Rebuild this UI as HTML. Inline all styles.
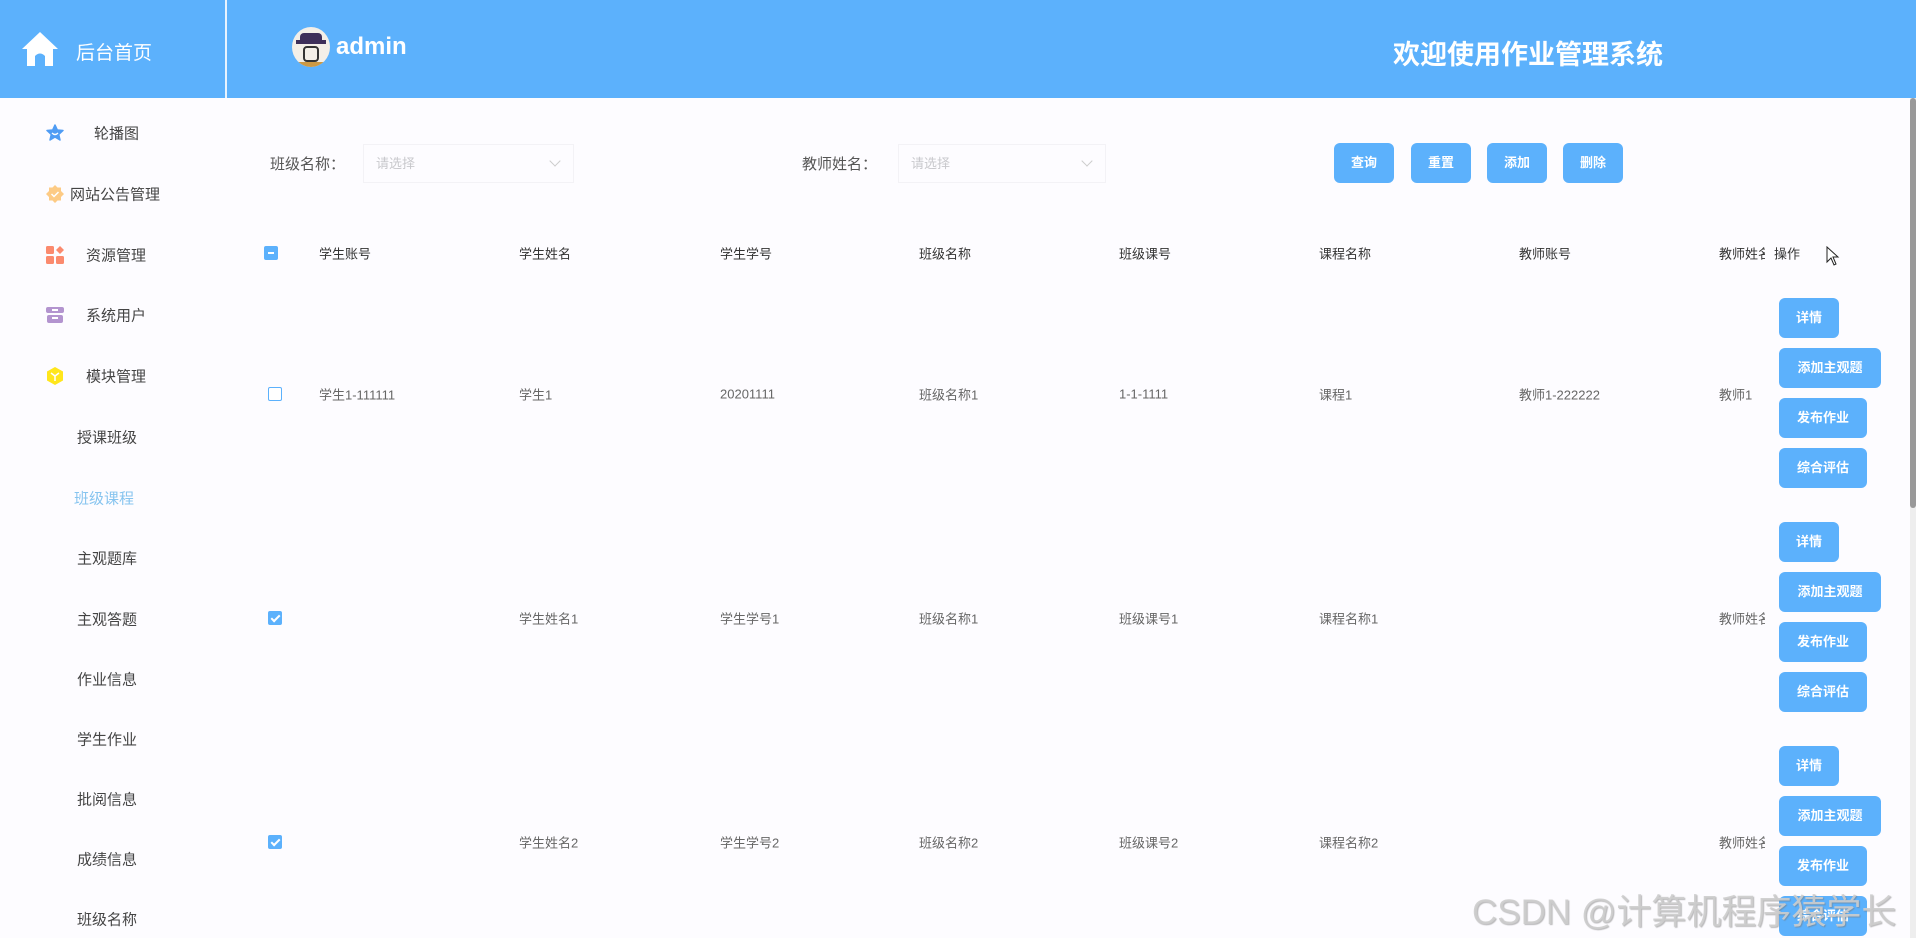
<!DOCTYPE html>
<html><head><meta charset="utf-8"><style>
*{margin:0;padding:0;box-sizing:border-box}
body{width:1916px;height:938px;overflow:hidden;background:#fdfcff;font-family:"Liberation Sans","Noto Sans CJK SC",sans-serif;position:relative}
.a{position:absolute;white-space:nowrap}
.hdr{left:0;top:0;width:1916px;height:98px;background:#5cb1fc}
.side{font-size:15px;color:#444;transform:translateY(-50%)}
.btn{position:absolute;background:#5cb1fc;color:#fff;font-size:13px;font-weight:bold;border-radius:6px;height:40px;line-height:40px;text-align:center}
.th{font-size:13px;color:#333;transform:translateY(-50%)}
.td{font-size:13px;color:#666;transform:translateY(-50%)}
.cb{position:absolute;width:14px;height:14px;border:1px solid #5cb1fc;border-radius:2px;background:#fff}
.cb.on{background:#5cb1fc}
.cb.on:after{content:"";position:absolute;left:4px;top:1px;width:3px;height:7px;border:solid #fff;border-width:0 2px 2px 0;transform:rotate(45deg)}
.sel{position:absolute;height:39px;border:1px solid #f3f2f6;background:#fdfcff;font-size:13px;color:#c8c8cc;line-height:37px;padding-left:12px}
.sel:after{content:"";position:absolute;right:14px;top:12px;width:7px;height:7px;border:solid #ccc;border-width:0 1px 1px 0;transform:rotate(45deg)}
</style></head><body>
<div class="a hdr"></div>
<div class="a" style="left:225px;top:0;width:2px;height:98px;background:#e8f3fe"></div>
<svg class="a" style="left:20px;top:30px" width="40" height="38" viewBox="0 0 40 38"><path d="M20 2 L38 19 L33 19 L33 36 L25 36 L25 26 Q20 21 15 26 L15 36 L7 36 L7 19 L2 19 Z" fill="#fff"/></svg>
<div class="a" style="left:76px;top:38px;font-size:19px;color:#fff">后台首页</div>
<div class="a" style="left:292px;top:27px;width:38px;height:40px;border-radius:50%;background:#f3efe8;overflow:hidden">
<div style="position:absolute;left:8px;top:6px;width:22px;height:8px;background:#3d2f5a;border-radius:4px 4px 0 0"></div>
<div style="position:absolute;left:4px;top:13px;width:30px;height:4px;background:#3d2f5a"></div>
<div style="position:absolute;left:11px;top:19px;width:16px;height:16px;border:2px solid #333;border-radius:4px"></div>
<div style="position:absolute;left:6px;top:35px;width:26px;height:5px;background:#c94"></div></div>
<div class="a" style="left:336px;top:33px;font-size:24px;color:#fff;font-weight:bold">admin</div>
<div class="a" style="left:1393px;top:33px;font-size:27px;color:#fff;font-weight:bold">欢迎使用作业管理系统</div>
<div class="a" style="left:1910px;top:98px;width:6px;height:840px;background:#eee"></div>
<div class="a" style="left:1910px;top:98px;width:6px;height:410px;background:#999;border-radius:3px"></div>

<svg class="a" style="left:46px;top:124px" width="18" height="18" viewBox="0 0 18 18"><path d="M9 1 L11.3 6 L17 6.5 L12.7 10.4 L14 16 L9 13 L4 16 L5.3 10.4 L1 6.5 L6.7 6 Z" fill="#4f9cf4" stroke="#4f9cf4" stroke-linejoin="round" stroke-width="1.5"/><path d="M6 9 Q9 12 12 9" stroke="#fff" fill="none" stroke-width="1.3"/></svg>
<div class="a side" style="left:94px;top:133px">轮播图</div>
<svg class="a" style="left:46px;top:185px" width="18" height="18" viewBox="0 0 18 18"><path d="M9 0 L11.5 2.5 L15 2.5 L15 6 L18 9 L15 12 L15 15.5 L11.5 15.5 L9 18 L6.5 15.5 L3 15.5 L3 12 L0 9 L3 6 L3 2.5 L6.5 2.5 Z" fill="#fdcb85"/><path d="M5.5 9 L8 11.5 L12.5 7" stroke="#fff" fill="none" stroke-width="1.5"/></svg>
<div class="a side" style="left:70px;top:194px">网站公告管理</div>
<svg class="a" style="left:46px;top:246px" width="18" height="18" viewBox="0 0 18 18"><rect x="0" y="0" width="8" height="8" rx="1.5" fill="#fb8a6e"/><rect x="0" y="10" width="8" height="8" rx="1.5" fill="#fb8a6e"/><rect x="10" y="10" width="8" height="8" rx="1.5" fill="#fb8a6e"/><path d="M14 0 L18 4 L14 8 L10 4 Z" fill="#fb8a6e"/></svg>
<div class="a side" style="left:86px;top:255px">资源管理</div>
<svg class="a" style="left:46px;top:306px" width="18" height="18" viewBox="0 0 18 18"><rect x="0" y="1" width="18" height="6" rx="2" fill="#b394cf"/><rect x="1" y="9" width="16" height="8" rx="2" fill="#b394cf"/><rect x="6" y="11" width="6" height="2" fill="#fff"/><rect x="6" y="3" width="6" height="2" fill="#fff"/></svg>
<div class="a side" style="left:86px;top:315px">系统用户</div>
<svg class="a" style="left:46px;top:367px" width="18" height="18" viewBox="0 0 18 18"><path d="M9 0 L17 4.5 L17 13.5 L9 18 L1 13.5 L1 4.5 Z" fill="#ffe61c"/><path d="M5 6 L9 9 L13 6 M9 9 L9 14" stroke="#fff" fill="none" stroke-width="1.5"/></svg>
<div class="a side" style="left:86px;top:376px">模块管理</div>
<div class="a side" style="left:77px;top:437px">授课班级</div>
<div class="a side" style="left:74px;top:498px;color:#86c4ef">班级课程</div>
<div class="a side" style="left:77px;top:558px">主观题库</div>
<div class="a side" style="left:77px;top:619px">主观答题</div>
<div class="a side" style="left:77px;top:679px">作业信息</div>
<div class="a side" style="left:77px;top:739px">学生作业</div>
<div class="a side" style="left:77px;top:799px">批阅信息</div>
<div class="a side" style="left:77px;top:859px">成绩信息</div>
<div class="a side" style="left:77px;top:919px">班级名称</div>

<div class="a" style="left:270px;top:153px;font-size:15px;color:#555">班级名称：</div>
<div class="sel" style="left:363px;top:144px;width:211px">请选择</div>
<div class="a" style="left:802px;top:153px;font-size:15px;color:#555">教师姓名：</div>
<div class="sel" style="left:898px;top:144px;width:208px">请选择</div>
<div class="btn" style="left:1334px;top:143px;width:60px">查询</div>
<div class="btn" style="left:1411px;top:143px;width:60px">重置</div>
<div class="btn" style="left:1487px;top:143px;width:60px">添加</div>
<div class="btn" style="left:1563px;top:143px;width:60px">删除</div>

<div class="cb" style="left:264px;top:246px;background:#5cb1fc"></div>
<div class="a" style="left:268px;top:252px;width:6px;height:2px;background:#fff"></div>
<div class="a th" style="left:319px;top:253px">学生账号</div>
<div class="a th" style="left:519px;top:253px">学生姓名</div>
<div class="a th" style="left:720px;top:253px">学生学号</div>
<div class="a th" style="left:919px;top:253px">班级名称</div>
<div class="a th" style="left:1119px;top:253px">班级课号</div>
<div class="a th" style="left:1319px;top:253px">课程名称</div>
<div class="a th" style="left:1519px;top:253px">教师账号</div>
<div class="a th" style="left:1719px;top:253px;width:46px;overflow:hidden">教师姓名</div>
<div class="a th" style="left:1774px;top:253px">操作</div>
<svg class="a" style="left:1826px;top:246px" width="14" height="20" viewBox="0 0 14 20"><path d="M1 1 L1 16 L5 12 L8 19 L10 18 L7 11 L12 11 Z" fill="#fff" stroke="#222" stroke-width="1"/></svg>

<div class="cb" style="left:268px;top:387px"></div>
<div class="a td" style="left:319px;top:394px">学生1-111111</div>
<div class="a td" style="left:519px;top:394px">学生1</div>
<div class="a td" style="left:720px;top:394px">20201111</div>
<div class="a td" style="left:919px;top:394px">班级名称1</div>
<div class="a td" style="left:1119px;top:394px">1-1-1111</div>
<div class="a td" style="left:1319px;top:394px">课程1</div>
<div class="a td" style="left:1519px;top:394px">教师1-222222</div>
<div class="a td" style="left:1719px;top:394px">教师1</div>
<div class="btn" style="left:1779px;top:298px;width:60px">详情</div>
<div class="btn" style="left:1779px;top:348px;width:102px">添加主观题</div>
<div class="btn" style="left:1779px;top:398px;width:88px">发布作业</div>
<div class="btn" style="left:1779px;top:448px;width:88px">综合评估</div>

<div class="cb on" style="left:268px;top:611px"></div>
<div class="a td" style="left:519px;top:618px">学生姓名1</div>
<div class="a td" style="left:720px;top:618px">学生学号1</div>
<div class="a td" style="left:919px;top:618px">班级名称1</div>
<div class="a td" style="left:1119px;top:618px">班级课号1</div>
<div class="a td" style="left:1319px;top:618px">课程名称1</div>
<div class="a td" style="left:1719px;top:618px;width:46px;overflow:hidden">教师姓名1</div>
<div class="btn" style="left:1779px;top:522px;width:60px">详情</div>
<div class="btn" style="left:1779px;top:572px;width:102px">添加主观题</div>
<div class="btn" style="left:1779px;top:622px;width:88px">发布作业</div>
<div class="btn" style="left:1779px;top:672px;width:88px">综合评估</div>

<div class="cb on" style="left:268px;top:835px"></div>
<div class="a td" style="left:519px;top:842px">学生姓名2</div>
<div class="a td" style="left:720px;top:842px">学生学号2</div>
<div class="a td" style="left:919px;top:842px">班级名称2</div>
<div class="a td" style="left:1119px;top:842px">班级课号2</div>
<div class="a td" style="left:1319px;top:842px">课程名称2</div>
<div class="a td" style="left:1719px;top:842px;width:46px;overflow:hidden">教师姓名2</div>
<div class="btn" style="left:1779px;top:746px;width:60px">详情</div>
<div class="btn" style="left:1779px;top:796px;width:102px">添加主观题</div>
<div class="btn" style="left:1779px;top:846px;width:88px">发布作业</div>
<div class="btn" style="left:1779px;top:896px;width:88px">综合评估</div>

<div class="a" style="left:1472px;top:884px;font-size:35px;font-weight:normal;color:rgba(205,205,205,0.9);text-shadow:1px 1px 1px rgba(120,120,120,0.5)">CSDN @计算机程序猿学长</div>
</body></html>
